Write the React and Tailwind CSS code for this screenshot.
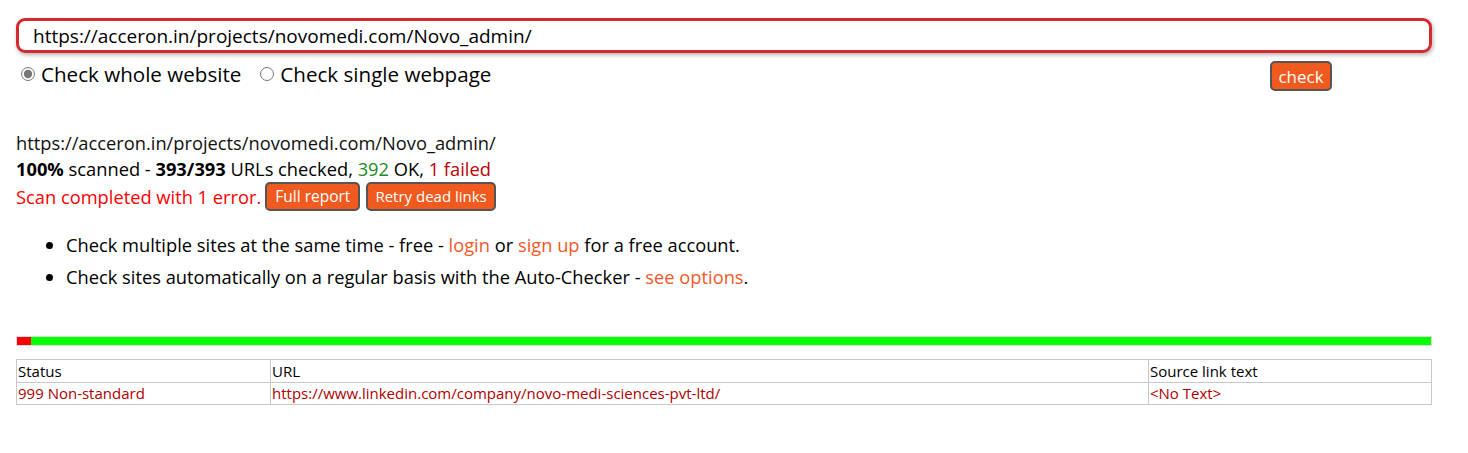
import React, { useState } from 'react';

const orangeBtn =
  'bg-[#f05a1e] text-white border-2 border-[#555] rounded-[5px] leading-none';

const App = () => {
  const [url, setUrl] = useState('https://acceron.in/projects/novomedi.com/Novo_admin/');
  const [mode, setMode] = useState('whole');

  return (
    <div className="min-h-screen bg-white text-black font-['Open_Sans',sans-serif] px-4 pt-[18px]">
      <input
        type="text"
        value={url}
        onChange={(e) => setUrl(e.target.value)}
        className="block w-[1416px] h-[35px] px-[14px] border-[3px] border-[#d32a2e] rounded-[9px] shadow-[1px_2px_4px_rgba(0,0,0,0.3)] text-[19px] outline-none"
      />

      <div className="flex items-start justify-between w-[1416px]">
        <div className="flex items-center mt-[7px] text-[20.6px] leading-[28px]">
          <label className="flex items-center ml-[5px]">
            <input
              type="radio"
              checked={mode === 'whole'}
              onChange={() => setMode('whole')}
              className="w-[14px] h-[14px] mr-[6px] accent-[#777]"
            />
            Check whole website
          </label>
          <label className="flex items-center ml-[19px]">
            <input
              type="radio"
              checked={mode === 'single'}
              onChange={() => setMode('single')}
              className="w-[14px] h-[14px] mr-[6px]"
            />
            Check single webpage
          </label>
        </div>
        <button className={`${orangeBtn} mt-[8px] mr-[100px] w-[62px] h-[30px] text-[17px]`}>check</button>
      </div>

      <div className="mt-[39px] text-[18.3px] leading-[26px]">
        <div className="font-medium text-[#111]">https://acceron.in/projects/novomedi.com/Novo_admin/</div>
        <div>
          <b>100%</b> scanned - <b>393/393</b> URLs checked, <span className="text-[#1e8a1e]">392</span> OK,{' '}
          <span className="text-[#c00000]">1 failed</span>
        </div>
        <div className="flex items-center">
          <span className="text-[#ff0000]">Scan completed with 1 error.</span>
          <button className={`${orangeBtn} ml-[4px] h-[29px] px-[8px] text-[15.5px]`}>Full report</button>
          <button className={`${orangeBtn} ml-[6px] h-[29px] px-[7px] text-[15px]`}>Retry dead links</button>
        </div>
      </div>

      <ul className="list-disc ml-[50px] mt-[18px] text-[18.3px] leading-[32px]">
        <li>
          Check multiple sites at the same time - free - <a className="text-[#f05a28]">login</a> or{' '}
          <a className="text-[#f05a28]">sign up</a> for a free account.
        </li>
        <li>
          Check sites automatically on a regular basis with the Auto-Checker -{' '}
          <a className="text-[#f05a28]">see options</a>.
        </li>
      </ul>

      <div className="mt-[43px] w-[1416px] h-[10px] border border-[#ddd] flex">
        <div className="w-[14px] bg-[#ff0000]" />
        <div className="flex-1 bg-[#00ff00]" />
      </div>

      <table className="mt-[13px] w-[1416px] border-collapse text-[15px]">
        <thead className="leading-[22px]">
          <tr>
            <th className="border border-[#c8c8c8] text-left font-normal pl-[1px] w-[254px]">Status</th>
            <th className="border border-[#c8c8c8] text-left font-normal pl-[1px] w-[878px]">URL</th>
            <th className="border border-[#c8c8c8] text-left font-normal pl-[1px]">Source link text</th>
          </tr>
        </thead>
        <tbody className="text-[#b00000] leading-[21px]">
          <tr>
            <td className="border border-[#c8c8c8] pl-[1px]">999 Non-standard</td>
            <td className="border border-[#c8c8c8] pl-[1px]">https://www.linkedin.com/company/novo-medi-sciences-pvt-ltd/</td>
            <td className="border border-[#c8c8c8] pl-[1px]">&lt;No Text&gt;</td>
          </tr>
        </tbody>
      </table>
    </div>
  );
};

export default App;
